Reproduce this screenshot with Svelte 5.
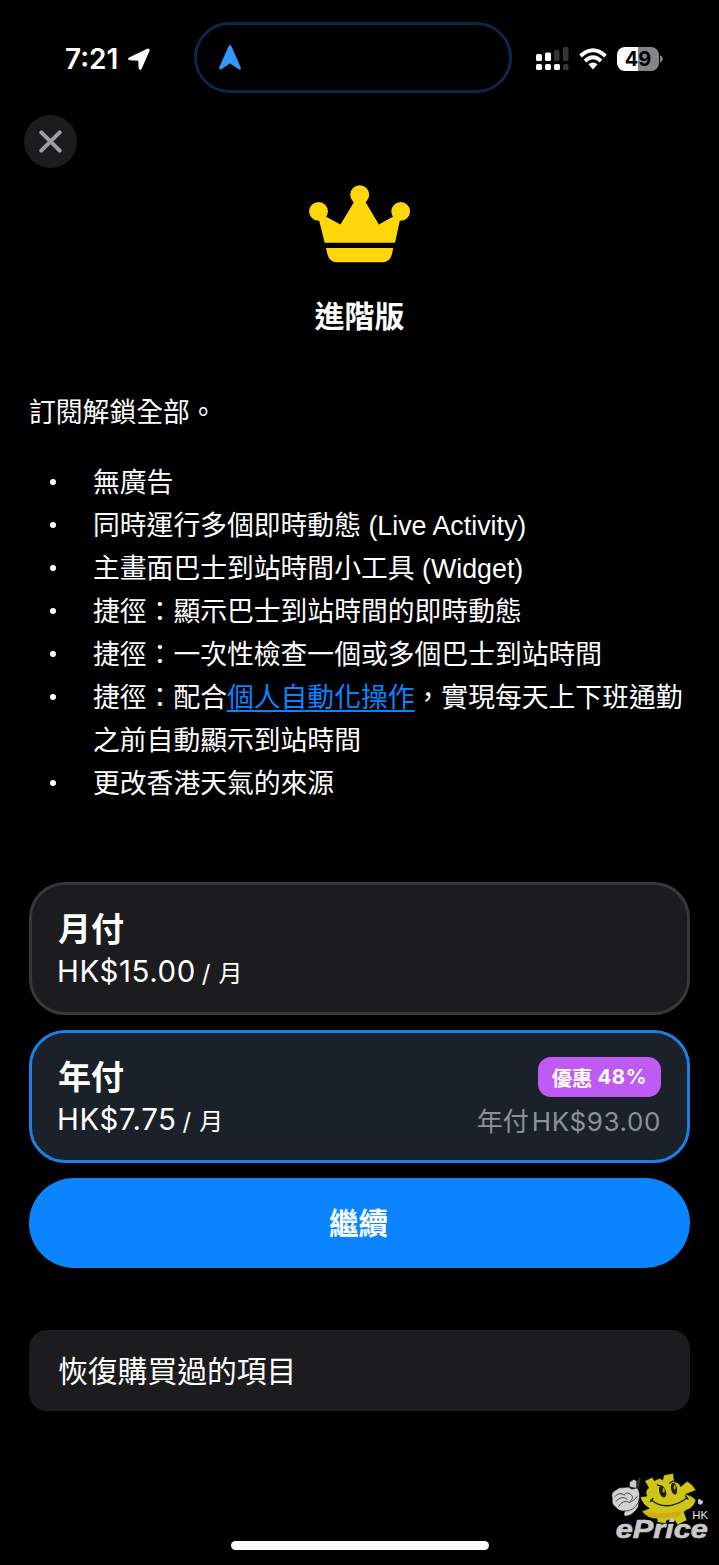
<script>
	const features = [
		{ text: '無廣告' },
		{ text: '同時運行多個即時動態 (Live Activity)' },
		{ text: '主畫面巴士到站時間小工具 (Widget)' },
		{ text: '捷徑：顯示巴士到站時間的即時動態' },
		{ text: '捷徑：一次性檢查一個或多個巴士到站時間' },
		{ text: '捷徑：配合', link: '個人自動化操作', after: '，實現每天上下班通勤之前自動顯示到站時間' },
		{ text: '更改香港天氣的來源' }
	];

	const plans = [
		{ id: 'monthly', name: '月付', price: 'HK$15.00', unit: '/ 月' },
		{ id: 'yearly', name: '年付', price: 'HK$7.75', unit: '/ 月', badge: ['優惠', '48%'], total: 'HK$93.00' }
	];

	let selected = $state('yearly');
</script>

<main lang="zh-Hant">
	<header class="status">
		<div class="clock">
			<span>7:21</span>
			<svg width="24" height="24" viewBox="0 0 24 24">
				<path d="M2 11 L20.5 2.2 Q22.8 1.4 22 3.8 L14.3 21.5 Q12.8 23.8 12.1 21.3 L11.8 13.2 L3 12.8 Q.2 12.3 2 11Z" fill="#fff" stroke="#fff" />
			</svg>
		</div>
		<div class="island">
			<svg width="24" height="27" viewBox="0 0 24 27">
				<path d="M10.6 2.3 Q12 -.2 13.4 2.3 L22.7 23.2 Q23.4 26.5 20.6 25.2 L12 19.6 L3.4 25.2 Q.6 26.5 1.3 23.2Z" fill="#3398fc" />
			</svg>
		</div>
		<div class="indicators">
			<svg width="33" height="24" viewBox="0 0 33 24">
				<g fill="#fff">
					<rect x="0" y="7" width="6" height="7" rx="1.6" />
					<rect x="9" y="5.5" width="6" height="8.5" rx="1.6" />
					<rect x="0" y="17" width="6" height="6" rx="1.6" />
					<rect x="9" y="17" width="6" height="6" rx="1.6" />
					<rect x="18" y="17" width="6" height="6" rx="1.6" />
				</g>
				<g fill="#353535">
					<rect x="18" y="3" width="5.5" height="11" rx="1.6" />
					<rect x="27" y="0" width="5.5" height="14" rx="1.6" />
					<rect x="27" y="17" width="5.5" height="6" rx="1.6" />
				</g>
			</svg>
			<svg class="wifi" width="28" height="22" viewBox="0 0 28 22">
				<g fill="none" stroke="#fff" stroke-width="3.8">
					<path d="M1.5 8 Q14 -3.6 26.5 8" />
					<path d="M6 13 Q14 5.6 22 13" />
				</g>
				<path d="M9.5 16.3 Q14 12.6 18.5 16.3 L14.7 20.8 Q14 21.5 13.3 20.8Z" fill="#fff" />
			</svg>
			<div class="battery"><span>49</span></div>
			<svg class="cap" width="3" height="8" viewBox="0 0 3 8">
				<path d="M0 0 Q2.8 1.5 2.8 4 Q2.8 6.5 0 8Z" fill="#858585" />
			</svg>
		</div>
	</header>

	<button class="close" aria-label="關閉">
		<svg width="23" height="23" viewBox="0 0 23 23">
			<path d="M2.3 2.3 L20.7 20.7 M20.7 2.3 L2.3 20.7" stroke="#9d9da4" stroke-width="4" stroke-linecap="round" />
		</svg>
	</button>

	<section class="hero">
		<svg width="102" height="78" viewBox="19 15 102 78" fill="#fed60a">
			<circle cx="28.5" cy="41.3" r="9.4" />
			<circle cx="69.7" cy="24.8" r="9.5" />
			<circle cx="110.7" cy="41.3" r="9.4" />
			<path d="M29 50 L34 45.5 L50.5 54.6 L64 32 H75.5 L88.9 54.6 L105 45.5 L110 50 L105 72.7 H34.7Z" />
			<path d="M36 78 H103.2 L102 84 Q100 92.2 92.5 92.2 H46.8 Q39.3 92.2 37.3 84Z" />
		</svg>
		<h1>進階版</h1>
	</section>

	<section class="intro">
		<p>訂閱解鎖全部。</p>
		<ul>
			{#each features as feature}
				<li>{feature.text}{#if feature.link}<a href="#automation">{feature.link}</a>{feature.after}{/if}</li>
			{/each}
		</ul>
	</section>

	<section class="plans">
		{#each plans as plan}
			<button class="plan" class:selected={selected === plan.id} onclick={() => (selected = plan.id)}>
				<span class="row">
					<strong>{plan.name}</strong>
					{#if plan.badge}
						<span class="badge">{plan.badge[0]}<b>{plan.badge[1]}</b></span>
					{/if}
				</span>
				<span class="row">
					<span class="price">{plan.price}<small>{plan.unit}</small></span>
					{#if plan.total}
						<span class="total"><small>年付</small>{plan.total}</span>
					{/if}
				</span>
			</button>
		{/each}
		<button class="continue">繼續</button>
	</section>

	<button class="restore">恢復購買過的項目</button>

	<div class="home"></div>

	<svg class="watermark" width="129" height="105" viewBox="0 0 387 315">
		<g stroke="#17150b" stroke-width="2" stroke-linejoin="round">
			<path d="M119 66 L132 58 L143 65 L141 86 L118 80Z" fill="#c9c9c9" />
			<path d="M140 66 L149 51 L152 54 L147 84 L140 84Z" fill="#3b3131" />
			<path d="M67 115 Q61 99 76 91 Q88 80 101 83 Q116 77 125 87 L142 84 Q153 100 146 124 Q149 140 138 151 Q122 169 105 169 Q98 164 105 153 Q86 155 77 141 Q64 134 67 115Z" fill="#d2d2d2" />
			<path d="M164 63 L187 52 L193 62 L209 55 L218 60 L222 45 L250 40 L253 66 Q269 68 272 80 L291 64 Q308 72 318 91 L287 103 Q307 107 318 121 Q310 145 288 151 L282 156 L291 181 L262 195 L253 178 L231 181 L226 191 L202 187 L201 176 Q172 177 156 154 L178 145 Q156 132 151 111 L171 108 Q163 95 176 83Z" fill="#cdc619" />
		</g>
		<path d="M160 153 Q206 166 281 153 L264 170 Q221 178 201 174 Q177 174 160 153Z" fill="#d6ab13" />
		<path d="M75 109 Q90 94 103 105 M78 124 Q94 105 111 117 M86 139 Q99 117 119 127 M103 104 Q110 94 122 103 Q134 113 122 121 M119 127 Q133 123 143 108 M104 153 Q130 155 144 129" fill="none" stroke="#4c4c4c" stroke-width="3" stroke-linecap="round" />
		<g fill="#211e0c">
			<ellipse cx="218" cy="95" rx="10" ry="18" transform="rotate(-18 218 95)" />
			<ellipse cx="252" cy="86" rx="9" ry="18" transform="rotate(-12 252 86)" />
		</g>
		<ellipse cx="221" cy="91" rx="3.5" ry="8" fill="#aaa21a" />
		<ellipse cx="254" cy="82" rx="3" ry="8" fill="#aaa21a" />
		<path d="M183 119 Q230 158 292 113 M181 125 L189 115 M286 108 L294 117 M202 75 L216 79 M239 69 L249 63" fill="none" stroke="#211e0c" stroke-width="4" stroke-linecap="round" />
		<path d="M324 120 Q329 113 333 121 Q342 121 338 130 Q330 138 324 130Z" fill="#c6c6c6" />
		<text x="307" y="178" font-size="34" fill="#e2e2e2">HK</text>
		<text class="brand" x="77" y="234" font-size="78" textLength="277" lengthAdjust="spacingAndGlyphs">ePrice</text>
	</svg>
</main>

<style>
	:global(body) {
		margin: 0;
		background: #000;
	}

	main {
		position: relative;
		box-sizing: border-box;
		display: flex;
		flex-direction: column;
		width: 719px;
		height: 1565px;
		padding: 0 29px 15px;
		overflow: hidden;
		background: #000;
		color: #fff;
		font-family: "Liberation Sans", "Noto Sans CJK TC", sans-serif;
	}

	button {
		margin: 0;
		border: none;
		color: inherit;
		font-family: inherit;
		text-align: left;
		cursor: pointer;
	}

	svg {
		display: block;
		flex: none;
	}

	.status {
		display: grid;
		grid-template-columns: 194px 318px 1fr;
		align-items: center;
		height: 71px;
		margin: 22px -29px 22px;
		font-family: Inter, sans-serif;
	}

	.clock {
		display: flex;
		align-items: center;
		gap: 9px;
		padding: 2px 0 0 65px;
		font-size: 28px;
		font-weight: 600;
	}

	.island {
		box-sizing: border-box;
		display: flex;
		align-items: center;
		height: 71px;
		padding: 0 0 1px 21px;
		border: 3px solid #0b2849;
		border-radius: 36px;
	}

	.indicators {
		display: flex;
		align-items: center;
		padding: 2px 0 0 24px;
	}

	.wifi {
		margin-left: 10px;
	}

	.battery {
		display: flex;
		align-items: center;
		justify-content: center;
		width: 42px;
		height: 24px;
		margin-left: 10px;
		border-radius: 8px;
		background: linear-gradient(90deg, #fff 49%, #858585 49%);
		color: #000;
		font-size: 20px;
		font-weight: 700;
		line-height: 24px;
	}

	.cap {
		margin-left: 1px;
	}

	.close {
		display: flex;
		align-items: center;
		justify-content: center;
		width: 53px;
		height: 53px;
		margin-left: -5px;
		padding: 0 1px 0 0;
		border-radius: 50%;
		background: #1c1c1e;
	}

	.hero {
		display: flex;
		flex-direction: column;
		align-items: center;
		margin-top: 17px;
	}

	h1 {
		margin: 32px 0 0;
		font-size: 30px;
		font-weight: 700;
		line-height: 44px;
	}

	.intro {
		margin-top: 53px;
		font-size: 26.8px;
		line-height: 43px;
	}

	.intro p {
		margin: 0 0 27px;
	}

	ul {
		margin: 0 -20px 0 0;
		padding: 0;
		list-style: none;
	}

	li {
		display: block;
		padding-left: 64px;
		padding-right: 20px;
	}

	li::before {
		content: "";
		float: left;
		width: 6px;
		height: 6px;
		margin: 17px 0 0 -43px;
		border-radius: 50%;
		background: #fff;
	}

	a {
		color: #0b84ff;
		text-decoration: underline;
		text-decoration-thickness: 2px;
		text-underline-offset: 3px;
	}

	.plans {
		display: flex;
		flex-direction: column;
		gap: 15px;
		margin-top: 76px;
	}

	.plan {
		box-sizing: border-box;
		display: flex;
		flex-direction: column;
		justify-content: flex-start;
		height: 133px;
		padding: 22px 26px 0 25px;
		border: 3px solid #38383a;
		border-radius: 36px;
		background: #1c1c1e;
	}

	.plan.selected {
		border-color: #1a80e6;
		background: #1b2129;
	}

	.row {
		display: flex;
		align-items: center;
		justify-content: space-between;
		height: 43px;
	}

	strong {
		padding: 2px 0 0 1px;
		font-size: 33px;
		line-height: 44px;
	}

	.price {
		font-family: Inter, "Noto Sans CJK TC", sans-serif;
		font-size: 29.4px;
		letter-spacing: .6px;
	}

	.price small {
		margin-left: 6px;
		font-size: 24px;
	}

	.badge {
		display: flex;
		align-items: center;
		gap: 5px;
		height: 40px;
		padding: 0 14px;
		border-radius: 13px;
		background: #bf5af2;
		font-family: Inter, "Noto Sans CJK TC", sans-serif;
		font-size: 20.4px;
		font-weight: 700;
	}

	.badge b {
		font-weight: 650;
		letter-spacing: .6px;
	}

	.total {
		color: #8c9097;
		font-family: Inter, "Noto Sans CJK TC", sans-serif;
		font-size: 26px;
		letter-spacing: .6px;
	}

	.total small {
		margin-right: 3px;
		font-size: 26px;
		letter-spacing: 0;
	}

	.continue {
		height: 90px;
		padding: 0 2px 4px 0;
		border-radius: 45px;
		background: #0b84ff;
		font-size: 29.5px;
		font-weight: 700;
		text-align: center;
	}

	.restore {
		height: 81px;
		margin-top: 62px;
		padding: 0 29px 4px;
		border-radius: 18px;
		background: #1c1c1e;
		font-size: 29.8px;
	}

	.home {
		align-self: center;
		width: 258px;
		height: 9px;
		margin-top: auto;
		border-radius: 5px;
		background: #fff;
	}

	.watermark {
		position: absolute;
		right: 0;
		bottom: 0;
	}

	.brand {
		fill: #c8c8c8;
		stroke: #c8c8c8;
		stroke-width: 2;
		font-style: italic;
		font-weight: 700;
	}
</style>
